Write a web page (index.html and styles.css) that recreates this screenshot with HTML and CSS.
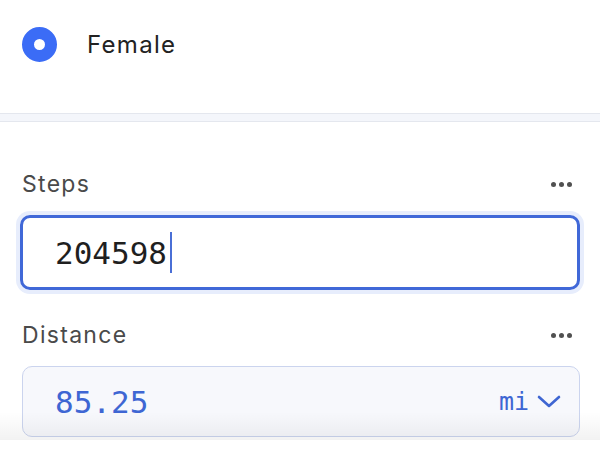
FILE: index.html
```html
<!DOCTYPE html>
<html>
<head>
<meta charset="utf-8">
<link rel="stylesheet" href="styles.css">
</head>
<body>
<div class="page">
  <div class="radio-row">
    <span class="radio"></span>
    <span class="radio-label">Female</span>
  </div>
  <div class="divider"></div>
  <div class="field steps">
    <div class="field-head">
      <span class="label">Steps</span>
      <span class="more"><i></i><i></i><i></i></span>
    </div>
    <div class="input focused">
      <span class="value">204598</span><span class="caret"></span>
    </div>
  </div>
  <div class="field distance">
    <div class="field-head">
      <span class="label">Distance</span>
      <span class="more"><i></i><i></i><i></i></span>
    </div>
    <div class="input readonly">
      <span class="value blue">85.25</span>
      <span class="unit">mi
        <svg width="24" height="14" viewBox="0 0 24 14"><path d="M2 2 L12 11 L22 2" fill="none" stroke="#3f66d2" stroke-width="2.6" stroke-linecap="round" stroke-linejoin="round"/></svg>
      </span>
    </div>
  </div>
  <div class="fade"></div>
</div>
</body>
</html>
```
FILE: styles.css
```css
html, body { margin: 0; padding: 0; background: #fff; }
body { width: 600px; height: 450px; overflow: hidden; font-family: "Inter", "Open Sans", sans-serif; }
.page { position: relative; height: 440px; overflow: hidden; }
.radio-row { display: flex; align-items: center; height: 88px; padding-left: 22px; }
.radio { box-sizing: content-box; width: 11px; height: 11px; border: 12px solid #3b6cf6; border-radius: 50%; background: #fff; margin-right: 30px; }
.radio-label { font-size: 24px; letter-spacing: 1.3px; color: #222; }
.divider { margin-top: 25px; height: 7px; border-top: 1px solid #e4e7ee; border-bottom: 1px solid #e4e7ee; background: #f4f6fb; }
.field { padding: 0 20px; }
.field-head { display: flex; align-items: center; justify-content: space-between; padding-left: 2px; height: 30px; }
.steps .field-head { margin-top: 47px; }
.distance .field-head { margin-top: 30px; }
.label { font-size: 23px; letter-spacing: 1.3px; color: #4a4a4a; }
.more { display: flex; gap: 3px; padding-right: 8px; }
.more i { width: 5px; height: 5px; border-radius: 50%; background: #505050; }
.input { display: flex; align-items: center; border-radius: 10px; box-sizing: border-box; }
.focused { margin-top: 16px; height: 75px; border: 3px solid #4068d8; box-shadow: 0 0 0 4px #e7edfc; padding-left: 32px; }
.readonly { margin-top: 16px; margin-left: 2px; height: 71px; border: 1px solid #cbd4ee; background: #f7f8fc; padding-left: 32px; padding-right: 18px; justify-content: space-between; }
.value { font-family: "DejaVu Sans Mono", monospace; font-size: 31px; color: #1f1f1f; }
.value.blue { color: #3e66d3; }
.caret { width: 2px; height: 41px; background: #4a6fd6; margin-left: 3px; }
.unit { display: flex; align-items: center; gap: 8px; font-family: "DejaVu Sans Mono", monospace; font-size: 25px; color: #3e66d3; }
.fade { position: absolute; left: 0; right: 0; bottom: 0; height: 28px; background: linear-gradient(rgba(0,0,0,0), rgba(0,0,0,0.05)); pointer-events: none; }
```
